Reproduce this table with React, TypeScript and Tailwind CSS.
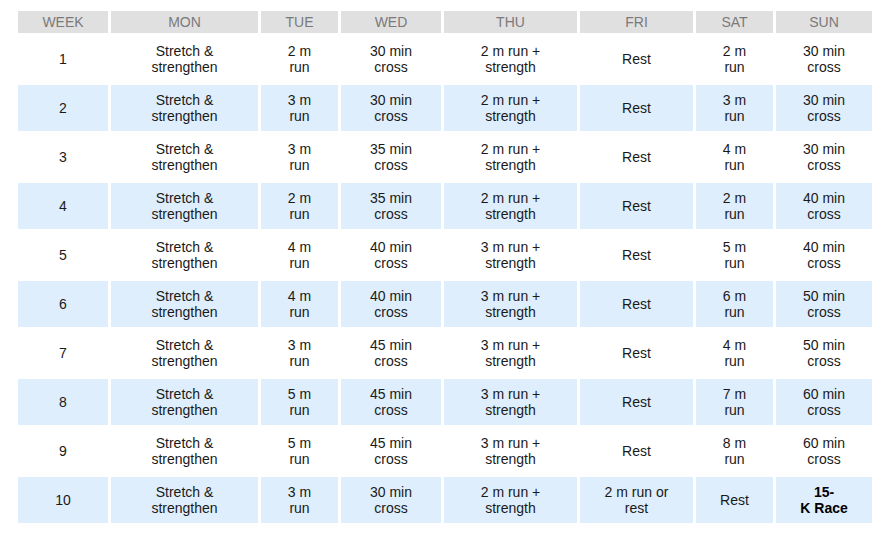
const days = ["WEEK", "MON", "TUE", "WED", "THU", "FRI", "SAT", "SUN"];

type Row = string[][];

const rows: Row[] = [
  [["1"], ["Stretch &", "strengthen"], ["2 m", "run"], ["30 min", "cross"], ["2 m run +", "strength"], ["Rest"], ["2 m", "run"], ["30 min", "cross"]],
  [["2"], ["Stretch &", "strengthen"], ["3 m", "run"], ["30 min", "cross"], ["2 m run +", "strength"], ["Rest"], ["3 m", "run"], ["30 min", "cross"]],
  [["3"], ["Stretch &", "strengthen"], ["3 m", "run"], ["35 min", "cross"], ["2 m run +", "strength"], ["Rest"], ["4 m", "run"], ["30 min", "cross"]],
  [["4"], ["Stretch &", "strengthen"], ["2 m", "run"], ["35 min", "cross"], ["2 m run +", "strength"], ["Rest"], ["2 m", "run"], ["40 min", "cross"]],
  [["5"], ["Stretch &", "strengthen"], ["4 m", "run"], ["40 min", "cross"], ["3 m run +", "strength"], ["Rest"], ["5 m", "run"], ["40 min", "cross"]],
  [["6"], ["Stretch &", "strengthen"], ["4 m", "run"], ["40 min", "cross"], ["3 m run +", "strength"], ["Rest"], ["6 m", "run"], ["50 min", "cross"]],
  [["7"], ["Stretch &", "strengthen"], ["3 m", "run"], ["45 min", "cross"], ["3 m run +", "strength"], ["Rest"], ["4 m", "run"], ["50 min", "cross"]],
  [["8"], ["Stretch &", "strengthen"], ["5 m", "run"], ["45 min", "cross"], ["3 m run +", "strength"], ["Rest"], ["7 m", "run"], ["60 min", "cross"]],
  [["9"], ["Stretch &", "strengthen"], ["5 m", "run"], ["45 min", "cross"], ["3 m run +", "strength"], ["Rest"], ["8 m", "run"], ["60 min", "cross"]],
  [["10"], ["Stretch &", "strengthen"], ["3 m", "run"], ["30 min", "cross"], ["2 m run +", "strength"], ["2 m run or", "rest"], ["Rest"], ["15-", "K Race"]],
];

export default function App() {
  return (
    <div className="w-[893px] h-[542px] bg-white pl-[18px] pt-[11px] font-['Liberation_Sans',Arial,sans-serif] text-[14px] leading-[16px]">
      <div className="grid grid-cols-[90px_147px_77px_100px_133px_113px_77px_96px] gap-[3px] w-fit">
        {days.map((d) => (
          <div key={d} className="h-[22px] flex items-center justify-center bg-[#e1e0e1] text-[#7a7a7a]">
            {d}
          </div>
        ))}
        {rows.map((row, i) =>
          row.map((cell, j) => {
            const race = i === 9 && j === 7;
            return (
              <div
                key={i + "-" + j}
                className={
                  "h-[46px] flex flex-col items-center justify-center text-center text-[#1a1a1a] " +
                  (i % 2 === 1 ? "bg-[#deeefc]" : "bg-white") +
                  (race ? " font-bold text-black" : "")
                }
              >
                {cell.map((line, k) => (
                  <span key={k}>{line}</span>
                ))}
              </div>
            );
          })
        )}
      </div>
    </div>
  );
}
